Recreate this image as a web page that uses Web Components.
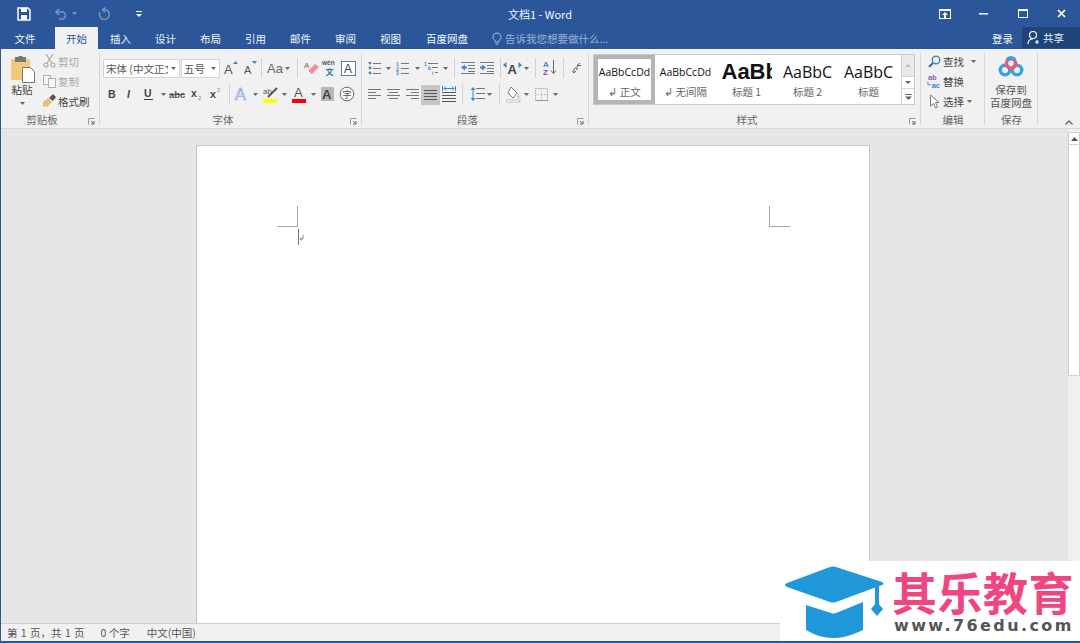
<!DOCTYPE html>
<html lang="zh"><head><meta charset="utf-8"><title>文档1 - Word</title>
<style>
html,body{margin:0;padding:0;height:643px;overflow:hidden;background:#e6e6e6}
body{font-family:"Noto Sans CJK SC","Liberation Sans",sans-serif;font-size:10.5px;color:#444}
</style></head><body>
<wd-app>
  <wd-titlebar slot="top"></wd-titlebar>
  <wd-tabs slot="top"></wd-tabs>
  <wd-ribbon slot="top">
    <rb-group w="100" label="剪贴板" launcher>
      <div style="display:flex;margin-top:-7px;height:61px">
        <rb-paste></rb-paste>
        <div>
          <rb-small icon="cut" dim>剪切</rb-small>
          <rb-small icon="copy" dim>复制</rb-small>
          <rb-small icon="brush">格式刷</rb-small>
        </div>
      </div>
    </rb-group>
    <rb-group w="262" label="字体" launcher pad="3">
      <rb-row>
        <rb-select w="77">宋体 (中文正文)</rb-select>
        <rb-select w="39" ml="1">五号</rb-select>
        <rb-btn w="18" ml="2" icon="growA"></rb-btn>
        <rb-btn w="18" ml="1" icon="shrinkA"></rb-btn>
        <rb-btn w="1" ml="2" icon="div"></rb-btn>
        <rb-btn w="20" ml="3" icon="aa"></rb-btn>
        <rb-btn w="5" icon="caret"></rb-btn>
        <rb-btn w="1" ml="7" icon="div"></rb-btn>
        <rb-btn w="18" ml="5" icon="eraser"></rb-btn>
        <rb-btn w="17" icon="wen"></rb-btn>
        <rb-btn w="18" ml="1" icon="boxA"></rb-btn>
      </rb-row>
      <rb-row>
        <rb-btn w="18" icon="bold"></rb-btn>
        <rb-btn w="18" icon="italic"></rb-btn>
        <rb-btn w="18" ml="1" icon="under"></rb-btn>
        <rb-btn w="10" icon="caret"></rb-btn>
        <rb-btn w="20" icon="strike"></rb-btn>
        <rb-btn w="18" icon="sub"></rb-btn>
        <rb-btn w="18" ml="1" icon="sup"></rb-btn>
        <rb-btn w="1" ml="4" icon="div"></rb-btn>
        <rb-btn w="18" ml="3" icon="fx"></rb-btn>
        <rb-btn w="8" icon="caret"></rb-btn>
        <rb-btn w="20" ml="1" icon="hl"></rb-btn>
        <rb-btn w="8" icon="caret"></rb-btn>
        <rb-btn w="20" ml="1" icon="colorA"></rb-btn>
        <rb-btn w="8" icon="caret"></rb-btn>
        <rb-btn w="18" ml="2" icon="shadeA"></rb-btn>
        <rb-btn w="18" ml="1" icon="zi"></rb-btn>
      </rb-row>
    </rb-group>
    <rb-group w="227" label="段落" launcher pad="4">
      <rb-row>
        <rb-btn w="16" icon="bullets"></rb-btn>
        <rb-btn w="8" ml="2" icon="caret"></rb-btn>
        <rb-btn w="16" ml="3" icon="numbers"></rb-btn>
        <rb-btn w="8" ml="2" icon="caret"></rb-btn>
        <rb-btn w="16" ml="3" icon="multi"></rb-btn>
        <rb-btn w="8" ml="1" icon="caret"></rb-btn>
        <rb-btn w="1" ml="5" icon="div"></rb-btn>
        <rb-btn w="16" ml="5" icon="outdent"></rb-btn>
        <rb-btn w="16" ml="3" icon="indent"></rb-btn>
        <rb-btn w="1" ml="5" icon="div"></rb-btn>
        <rb-btn w="19" ml="2" icon="asian"></rb-btn>
        <rb-btn w="8" icon="caret"></rb-btn>
        <rb-btn w="1" ml="5" icon="div"></rb-btn>
        <rb-btn w="18" ml="5" icon="az"></rb-btn>
        <rb-btn w="1" ml="4" icon="div"></rb-btn>
        <rb-btn w="16" ml="4" icon="pil"></rb-btn>
      </rb-row>
      <rb-row>
        <rb-btn w="16" icon="left"></rb-btn>
        <rb-btn w="16" ml="3" icon="center"></rb-btn>
        <rb-btn w="16" ml="3" icon="right"></rb-btn>
        <rb-btn w="19" ml="1" icon="justify" active></rb-btn>
        <rb-btn w="16" ml="1" icon="dist"></rb-btn>
        <rb-btn w="1" ml="5" icon="div"></rb-btn>
        <rb-btn w="16" ml="6" icon="spacing"></rb-btn>
        <rb-btn w="8" icon="caret"></rb-btn>
        <rb-btn w="1" ml="6" icon="div"></rb-btn>
        <rb-btn w="16" ml="5" icon="bucket"></rb-btn>
        <rb-btn w="8" ml="1" icon="caret"></rb-btn>
        <rb-btn w="16" ml="3" icon="borders"></rb-btn>
        <rb-btn w="8" ml="2" icon="caret"></rb-btn>
      </rb-row>
    </rb-group>
    <rb-group w="332" label="样式" launcher pad="4"><rb-gallery></rb-gallery></rb-group>
    <rb-group w="64" label="编辑">
      <div style="margin-top:-7px;padding-left:6px">
        <rb-small icon="find" caret="5">查找</rb-small>
        <rb-small icon="replace">替换</rb-small>
        <rb-small icon="select" caret="1">选择</rb-small>
      </div>
    </rb-group>
    <rb-group w="53" label="保存"><rb-save></rb-save></rb-group>
    <rb-collapse></rb-collapse>
  </wd-ribbon>
  <wd-page slot="main"></wd-page>
  <wd-scroll slot="main"></wd-scroll>
  <wd-status slot="bottom"></wd-status>
  <wd-logo slot="over"></wd-logo>
</wd-app>
<script>
const svg=(w,h,s)=>`<svg xmlns="http://www.w3.org/2000/svg" width="${w}" height="${h}" viewBox="0 0 ${w} ${h}" style="display:block">${s}</svg>`;
const lines=(arr,c='#777')=>arr.map(([x,y,w])=>`<rect x="${x}" y="${y}" width="${w}" height="1" fill="${c}"/>`).join('');
const T=(x,y,t,size,fill,extra='')=>`<text x="${x}" y="${y}" font-size="${size}" fill="${fill}" font-family="Liberation Sans,sans-serif" ${extra}>${t}</text>`;
const BL='#3f83c8';
const ICONS={
 caret:()=>svg(5,3,'<path d="M0 0h5L2.5 3z" fill="#666"/>'),
 div:()=>svg(1,20,'<rect width="1" height="20" fill="#d2d2d2"/>'),
 growA:()=>svg(16,16,T(1,14,'A',13,'#555')+'<path d="M10 4l2.500-3 2.500 3z" fill="'+BL+'"/>'),
 shrinkA:()=>svg(16,16,T(2,14,'A',11,'#555')+'<path d="M10 1h5l-2.500 3z" fill="'+BL+'"/>'),
 aa:()=>svg(18,14,T(1,12,'Aa',13,'#666')),
 eraser:()=>svg(16,16,T(0,8,'A',8,'#8a5a6a')+'<path d="M4 11l7-7 4 3-7 7H6z" fill="#ef8f9c"/><path d="M4 11l3 3" stroke="#fff"/>'),
 wen:()=>svg(17,19,T(1,6,'wén',6.500,'#555','font-weight="700"')+`<text x="4.500" y="16" font-size="8" fill="#1f73b7" font-weight="700" font-family="Noto Sans CJK SC">文</text>`),
 boxA:()=>svg(15,15,'<rect x=".5" y=".5" width="14" height="14" fill="#fff" stroke="#4f7fb5"/>'+T(3,12,'A',12,'#444')),
 bold:()=>svg(12,14,T(2,11,'B',10.500,'#444','font-weight="700"')),
 italic:()=>svg(12,14,T(3,11,'I',10.500,'#444','font-family="Liberation Serif" font-weight="700" font-style="italic"')),
 under:()=>svg(12,14,T(1,10,'U',10.500,'#444','font-weight="700"')+'<rect x="1" y="12" width="9" height="1" fill="#444"/>'),
 strike:()=>svg(20,12,T(1,10,'abc',9.500,'#555','font-weight="700"')+'<rect x="1" y="6" width="16" height="1" fill="#555"/>'),
 sub:()=>svg(14,14,T(1,10,'x',10.500,'#444','font-weight="700"')+T(8,13,'2',5.500,BL)),
 sup:()=>svg(14,14,T(1,11,'x',10.500,'#444','font-weight="700"')+T(8,5,'2',5.500,BL)),
 fx:()=>svg(16,16,`<text x="1" y="14" font-size="16" fill="#eef4fb" stroke="#5b94cf" stroke-width=".6" font-family="Liberation Sans">A</text>`),
 hl:()=>svg(15,19,T(0,9,'ab',8,'#555')+'<path d="M5 12l9-9" stroke="#555" stroke-width="2"/><rect y="14" width="14" height="4" fill="#ffff00"/>'),
 colorA:()=>svg(14,19,T(2,12,'A',13,'#555')+'<rect y="14" width="14" height="4" fill="#ff0000"/>'),
 shadeA:()=>svg(14,15,'<rect width="13" height="14" fill="#b8b8b8"/>'+T(1,12,'A',13,'#444','font-weight="700"')),
 zi:()=>svg(16,16,'<circle cx="8" cy="8" r="6.800" fill="#fbfbfb" stroke="#666"/><text x="3.500" y="11.500" font-size="9" fill="#555" font-family="Noto Sans CJK SC">字</text>'),
 bullets:()=>svg(13,13,[1,6,11].map(y=>`<circle cx="2" cy="${y}" r="1.400" fill="${BL}"/>`).join('')+lines([[5,1,8],[5,6,8],[5,11,8]])),
 numbers:()=>svg(14,14,T(0,4.500,'1',5,BL,'font-weight="700"')+T(0,9.500,'2',5,BL,'font-weight="700"')+T(0,14,'3',5,BL,'font-weight="700"')+lines([[5,2,8],[5,7,8],[5,12,8]])),
 multi:()=>svg(16,14,T(0,5,'1',5,BL,'font-weight="700"')+T(4,9,'b',5,BL,'font-weight="700"')+T(8,14,'i',5,BL,'font-weight="700"')+lines([[4,2,10],[8,6,6],[11,11,3]])),
 outdent:()=>svg(15,12,lines([[0,0,14],[7,3,7],[7,6,7],[7,9,7],[0,11,14]])+`<path d="M0 5.500l4-3v2h2v2H4v2z" fill="${BL}"/>`),
 indent:()=>svg(15,12,lines([[0,0,14],[7,3,7],[7,6,7],[7,9,7],[0,11,14]])+`<path d="M6 5.500l-4-3v2H0v2h2v2z" fill="${BL}"/>`),
 asian:()=>svg(19,16,T(4.500,14,'A',13,'#444','font-weight="700"')+`<path d="M0 5l3.500-3v6zM19 5l-3.500-3v6z" fill="${BL}"/>`),
 az:()=>svg(14,16,T(0,7,'A',8,BL,'font-weight="700"')+T(0,15,'Z',8,'#8a3fa8','font-weight="700"')+'<path d="M10.500 0v13M8 10.500l2.500 3 2.500-3" stroke="#666" fill="none"/>'),
 pil:()=>svg(11,12,`<path d="M9 1L6 3.500h4M7 4L3 7M3 7v4M1 9l2 2 2-2" stroke="#666" fill="none"/><circle cx="6" cy="7" r="1" fill="${BL}"/>`),
 left:()=>svg(13,12,lines([[0,1,13],[0,4,8],[0,7,13],[0,10,8]])),
 center:()=>svg(13,12,lines([[0,1,13],[2,4,9],[0,7,13],[2,10,9]])),
 right:()=>svg(13,12,lines([[0,1,13],[5,4,8],[0,7,13],[5,10,8]])),
 justify:()=>svg(13,12,lines([[0,1,13],[0,4,13],[0,7,13],[0,10,13]],'#555')),
 dist:()=>svg(14,17,lines([[0,6,14],[0,9,14],[0,12,14],[0,15,14]],'#555')+`<path d="M.5 0v5M13.500 0v5" stroke="${BL}"/><path d="M2 2.500h10M4 .5L2 2.500l2 2M10 .5l2 2-2 2" stroke="${BL}" fill="none"/>`),
 spacing:()=>svg(15,16,lines([[6,2,9],[6,7,9],[6,12,9]])+`<path d="M3 2v12" stroke="${BL}"/><path d="M.5 4L3 1l2.500 3zM.5 12L3 15l2.500-3z" fill="${BL}"/>`),
 bucket:()=>svg(15,17,'<path d="M5 1l6 6-4 5-5-5z" fill="#fdfdfd" stroke="#777"/><path d="M12 8c1 2 2 3 1 4s-2 0-1-4z" fill="#e6b35c"/><rect y="14" width="14" height="2" fill="#fff" stroke="#999" stroke-width=".6"/>'),
 borders:()=>svg(13,13,'<rect x=".5" y=".5" width="12" height="12" fill="none" stroke="#aaa" stroke-dasharray="1.500 1"/><path d="M6.500 1v11M1 6.500h11" stroke="#bbb" stroke-dasharray="1 1"/><rect y="12" width="13" height="1" fill="#999"/>'),
 cut:()=>svg(13,14,'<g fill="none" stroke="#a8a8a8" stroke-width="1.200"><circle cx="3" cy="11" r="2"/><circle cx="10" cy="11" r="2"/><path d="M4 9L10 0M9 9L3 0"/></g>'),
 copy:()=>svg(13,13,'<g fill="#f5f5f5" stroke="#b0b0b0"><rect x=".5" y=".5" width="7" height="9"/><rect x="5.500" y="3.500" width="7" height="9"/></g>'),
 brush:()=>svg(14,14,'<path d="M1 8l5-4 4 4-5 5-2-1-2 1z" fill="#e9bd77"/><path d="M7 4l4-4 3 3-3 4z" fill="#555"/>'),
 find:()=>svg(13,13,`<circle cx="8" cy="5" r="3.800" fill="none" stroke="${BL}" stroke-width="1.400"/><path d="M5 8l-4 4" stroke="#2a6aa8" stroke-width="1.800"/>`),
 replace:()=>svg(15,16,T(1,7,'ab',8,'#8a5fb0','font-weight="700"')+T(5,15,'ac',8,BL,'font-weight="700"')+`<path d="M1 9v3h3" stroke="${BL}" fill="none"/>`),
 select:()=>svg(11,15,'<path d="M1.500 1v11l3-2.500 2 4.500 2-1-2-4.500h3.500z" fill="#fff" stroke="#777"/>')
};
function def(name,css,html){
  customElements.define(name,class extends HTMLElement{
    constructor(){super();this.attachShadow({mode:'open'});this.shadowRoot.innerHTML=`<style>${css}</style>`+(typeof html==='function'?html(this):html);}
  });
}
def('wd-app',`:host{display:flex;flex-direction:column;position:relative;height:643px;width:1080px;box-sizing:border-box;border-left:1px solid #2b579a;border-bottom:2px solid #2b579a;overflow:hidden;background:#e6e6e6}
 .main{flex:1;display:grid;grid-template-columns:1fr 13px;min-height:0;overflow:hidden}.top{margin-left:-1px}`,
 `<div class="top"><slot name="top"></slot></div><div class="main"><slot name="main"></slot></div><slot name="bottom"></slot><slot name="over"></slot>`);
def('wd-titlebar',`:host{display:flex;height:27px;background:#2b579a;color:#fff;align-items:center;position:relative;font-size:10.5px}
 .c{display:flex;align-items:center;justify-content:center}
 .t{position:absolute;left:0;right:0;text-align:center;color:#f0f4fa;font-size:11px}
 .r{margin-left:auto;display:flex}.r .c{width:39px;height:27px}`,
 `<div class="c" style="width:14px;margin-left:17px">${svg(14,14,'<path d="M1 1h10l2 2v10H1z" fill="none" stroke="#fff" stroke-width="1.500"/><rect x="4" y="1" width="6" height="4" fill="#fff"/><rect x="4" y="8" width="6" height="5" fill="#fff"/>')}</div>
 <div class="c" style="margin-left:23px;width:13px">${svg(13,12,'<path d="M2 4h6a3.500 3.500 0 010 7H5M5 1L2 4l3 3" fill="none" stroke="#7a95c0" stroke-width="1.500"/>')}</div>
 <div class="c" style="margin-left:5px">${svg(5,3,'<path d="M0 0h5L2.500 3z" fill="#7a95c0"/>')}</div>
 <div class="c" style="margin-left:20px">${svg(13,13,'<path d="M8.500 .5l-3 2.300 3 2.300M5.500 2.800A5 5 0 113 5" fill="none" stroke="#7a95c0" stroke-width="1.400"/>')}</div>
 <div class="c" style="margin-left:26px">${svg(6,6,'<rect width="6" height="1" fill="#fff"/><path d="M0 3h6L3 6z" fill="#fff"/>')}</div>
 <div class="t">文档1 - Word</div>
 <div class="r">
 <div class="c">${svg(12,10,'<rect x=".5" y=".5" width="11" height="9" fill="none" stroke="#fff"/><rect y="0" width="12" height="2" fill="#fff"/><path d="M6 3l3 3H7v3H5V6H3z" fill="#fff"/>')}</div>
 <div class="c">${svg(9,2,'<rect width="9" height="1.500" fill="#fff"/>')}</div>
 <div class="c">${svg(10,9,'<rect x=".5" y="1" width="9" height="7.500" fill="none" stroke="#fff"/><rect width="10" height="2" fill="#fff"/>')}</div>
 <div class="c" style="width:38px">${svg(9,9,'<path d="M1 1l7 7M8 1L1 8" stroke="#fff" stroke-width="1.700"/>')}</div>
 </div>`);
def('wd-tabs',`:host{display:flex;height:22px;background:#2b579a;color:#f2f5fa;font-size:10.5px;align-items:stretch;position:relative}
 .t{width:45px;display:flex;align-items:center;justify-content:center;height:22px}
 .a{background:#f1f1f1;color:#2b579a;width:43px;height:23px;position:relative;z-index:2}
 .tell{margin-left:11px;display:flex;align-items:center;color:#9db3d3;gap:3px}
 .right{margin-left:auto;display:flex}.login{display:flex;align-items:center;margin-right:9px}
 .share{width:58px;background:#1f4478;display:flex;align-items:center;gap:2px;padding-left:5px;box-sizing:border-box;height:21px}`,
 `<div class="t" style="width:44px;margin-left:3px">文件</div><div class="t" style="width:8px"></div><div class="t a">开始</div>
 <div class="t">插入</div><div class="t">设计</div><div class="t">布局</div><div class="t">引用</div><div class="t">邮件</div><div class="t">审阅</div><div class="t">视图</div>
 <div class="t" style="width:68px">百度网盘</div>
 <div class="tell">${svg(10,13,'<path d="M5 1a4 4 0 00-2 7.500V10h4V8.500A4 4 0 005 1zM3.500 12h3" fill="none" stroke="#a9bcd9"/>')}<span>告诉我您想要做什么...</span></div>
 <div class="right"><div class="login">登录</div><div class="share">${svg(14,15,'<circle cx="6" cy="5" r="3.500" fill="none" stroke="#fff" stroke-width="1.200"/><path d="M1 14c0-3 2-5 5-5M10 10v4M8 12h4" fill="none" stroke="#fff" stroke-width="1.200"/>')}<span>共享</span></div></div>`);
def('wd-ribbon',`:host{display:flex;height:80px;background:#f1f1f1;border-bottom:1px solid #d6d6d6;box-sizing:border-box;color:#444}`,`<slot></slot>`);
def('rb-group',`:host{display:flex;flex-direction:column;box-sizing:border-box;height:79px;position:relative;flex:none}
 .rule{position:absolute;right:0;top:4px;bottom:3px;width:1px;background:#d6d6d6}
 .body{flex:1;padding-top:9px;display:flex;flex-direction:column;gap:6px;min-height:0}
 .lab{height:17px;display:grid;grid-template-columns:1fr auto 1fr;align-items:center;color:#666;font-size:10.5px;box-sizing:border-box}
 .lab.l{grid-template-columns:1fr auto 1fr 16px}
 .lab span{grid-column:2}.lab i{grid-column:4;justify-self:end;margin:3px 5px 0 0;display:block}`,
 h=>{h.style.width=h.getAttribute('w')+'px';const p=h.getAttribute('pad')||0;const l=h.hasAttribute('launcher');return `<div class="rule"></div><div class="body" style="padding-left:${p}px"><slot></slot></div><div class="lab ${l?'l':''}"><span>${h.getAttribute('label')}</span>${l?`<i>${svg(7,7,'<path d="M.5 6.500v-6h6" fill="none" stroke="#999"/><path d="M3 3l3 3M6 3v3H3" fill="none" stroke="#666"/>')}</i>`:''}</div>`});
def('rb-row',`:host{display:flex;height:20px;align-items:center;flex:none}`,`<slot></slot>`);
def('rb-btn',`:host{display:flex;align-items:center;justify-content:center;height:20px;flex:none}:host([active]){background:#c6c6c6;position:relative;top:1px}`,
 h=>{h.style.width=h.getAttribute('w')+'px';h.style.marginLeft=(h.getAttribute('ml')||0)+'px';return ICONS[h.getAttribute('icon')]()});
def('rb-select',`:host{display:flex;align-items:center;height:19px;box-sizing:border-box;background:#fff;border:1px solid #d4d4d4;padding-left:2px;font-size:10.5px;color:#555;flex:none;overflow:hidden;position:relative}
 .tx{flex:1;white-space:nowrap;overflow:hidden;min-width:0}.cr{width:11px;flex:none;display:flex;justify-content:center}`,
 h=>{h.style.width=h.getAttribute('w')+'px';h.style.marginLeft=(h.getAttribute('ml')||0)+'px';return `<div class="tx"><slot></slot></div><div class="cr">${ICONS.caret()}</div>`});
def('rb-small',`:host{display:flex;align-items:center;height:20px;gap:2px;font-size:10.5px;color:#444;white-space:nowrap}
 :host([dim]){color:#a6a6a6}.i{width:14px;display:flex;justify-content:center;flex:none}.cr{display:block}`,
 h=>`<div class="i">${ICONS[h.getAttribute('icon')]()}</div><slot></slot>${h.hasAttribute('caret')?`<span class="cr" style="margin-left:${h.getAttribute('caret')}px">${ICONS.caret()}</span>`:''}`);
def('rb-paste',`:host{display:flex;flex-direction:column;align-items:center;width:44px;margin-right:-2px;padding-top:5px;box-sizing:border-box;font-size:10.5px;color:#444;flex:none}
 svg{margin-left:2px}.l{margin-top:-1px}.c{margin-top:5px}.c svg{margin:0}`,
 `${svg(24,27,'<rect x="0" y="3" width="19" height="21" rx="1" fill="#f0c97c"/><rect x="4" y="1" width="11" height="5" fill="#777"/><rect x="7.500" y="0" width="4" height="3" fill="#777"/><path d="M11.500 11.500h8l4 4v11h-12z" fill="#fff" stroke="#777"/>')}
 <div class="l">粘贴</div><div class="c">${ICONS.caret()}</div>`);
def('rb-gallery',`:host{display:flex;height:51px;width:322px;box-sizing:border-box;background:#fff;border:1px solid #c8c8c8;margin-top:-4px;color:#666}
 .it{width:61px;box-sizing:border-box;display:flex;flex-direction:column;align-items:center;overflow:hidden;flex:none}
 .sel{border:4px solid #b4b4b4;padding-top:2px;}
 .it:not(.sel){padding-top:6px}
 .s{height:22px;display:flex;align-items:center;white-space:nowrap;font-family:"Open Sans","Liberation Sans",sans-serif;color:#111;width:53px;justify-content:center;overflow:hidden}
 .n{font-size:10.5px;line-height:14px;margin-top:2px;display:flex;align-items:center;gap:3px}
 .x{margin-left:auto;width:12px;display:flex;flex-direction:column;border-left:1px solid #d4d4d4;flex:none}
 .x div{display:flex;align-items:center;justify-content:center;background:#fff;border-bottom:1px solid #d4d4d4;box-sizing:border-box}`,
 `<div class="it sel"><div class="s" style="font-size:10.500px">AaBbCcDd</div><div class="n">↲ 正文</div></div>
 <div class="it"><div class="s" style="font-size:10.500px">AaBbCcDd</div><div class="n">↲ 无间隔</div></div>
 <div class="it"><div class="s" style="font-size:22px;font-weight:700;justify-content:flex-start;width:50px;font-family:'Liberation Sans'">AaBb</div><div class="n">标题 1</div></div>
 <div class="it"><div class="s" style="font-size:16px">AaBbC</div><div class="n">标题 2</div></div>
 <div class="it"><div class="s" style="font-size:16px">AaBbC</div><div class="n">标题</div></div>
 <div class="x"><div style="height:22px;background:#e9e9e9">${svg(6,3,'<path d="M0 3h6L3 0z" fill="#bdbdbd"/>')}</div><div style="height:12px">${svg(6,3,'<path d="M0 0h6L3 3z" fill="#666"/>')}</div><div style="height:15px;border:0">${svg(7,6,'<rect width="7" height="1" fill="#666"/><path d="M0 2.500h7L3.500 6z" fill="#666"/>')}</div></div>`);
def('rb-save',`:host{display:flex;flex-direction:column;align-items:center;margin-top:-2px;font-size:10.5px;line-height:13px;color:#555;width:52px;text-align:center}
 svg{margin-bottom:5px}`,
 svg(26,22,'<g fill="none" stroke-width="3.400"><circle cx="7" cy="14" r="4.800" stroke="#38a1ea"/><circle cx="19" cy="14" r="4.800" stroke="#38a1ea"/><circle cx="13" cy="7.500" r="4.600" stroke="#ef5b6d"/><path d="M9 3.800a5 5 0 018 0" stroke="#38a1ea"/></g>')+`<div>保存到<br>百度网盘</div>`);
def('rb-collapse',`:host{flex:1;display:flex;justify-content:flex-end;align-items:flex-end;padding:0 7px 3px 0}`,svg(8,5,'<path d="M.5 4.500L4 1l3.500 3.500" fill="none" stroke="#666" stroke-width="1.400"/>'));
def('wd-page',`:host{display:flex;justify-content:center;padding:16px 2px 0 0;min-height:0;overflow:hidden}
 .p{width:674px;box-sizing:border-box;height:600px;background:#fff;border:1px solid #c6c6c6;padding:60px 79px 0 80px}
 .m{display:flex;justify-content:space-between}
 .a,.b{width:20px;height:20px;border-bottom:1px solid #a8a8a8}.a{border-right:1px solid #a8a8a8}.b{border-left:1px solid #a8a8a8}
 .cur{margin:2px 0 0 21px;display:block}`,
 `<div class="p"><div class="m"><div class="a"></div><div class="b"></div></div><div class="cur">${svg(7,17,'<rect width="1" height="16" fill="#777"/><path d="M5 6v4H2M3.500 8.500L2 10l1.500 1.500" fill="none" stroke="#888"/>')}</div></div>`);
def('wd-scroll',`:host{display:flex;flex-direction:column;background:#f0f0f0;border-left:1px solid #e2e2e2;padding-top:3px;box-sizing:border-box}
 .u{height:13px;background:#fff;border:1px solid #d0d0d0;box-sizing:border-box;display:flex;align-items:center;justify-content:center}
 .t{height:231px;background:#fff;border:1px solid #d0d0d0;border-top:0;box-sizing:border-box}`,
 `<div class="u">${svg(7,4,'<path d="M0 4h7L3.500 0z" fill="#555"/>')}</div><div class="t"></div>`);
def('wd-status',`:host{display:flex;height:18px;background:#f1f1f1;border-top:1px solid #cfcfcf;box-sizing:border-box;align-items:center;font-size:10.5px;color:#555;padding-left:6px;flex:none}
 span{white-space:pre}`,`<span style="word-spacing:1px">第 1 页，共 1 页</span><span style="margin-left:16px">0 个字</span><span style="margin-left:17px">中文(中国)</span>`);
def('wd-logo',`:host{position:absolute;right:0;bottom:-2px;width:300px;height:82px;background:#fff;display:flex}
 .cap{margin:4px 0 0 4px;flex:none}
 .r{margin-left:4px;display:flex;flex-direction:column}
 .a{font:700 45px/45px "Noto Sans CJK SC",sans-serif;letter-spacing:.5px;color:#ef4581;margin-top:8px;white-space:nowrap}
 .b{font:700 16px/16px "DejaVu Sans",sans-serif;letter-spacing:2.4px;color:#555;margin:4px 0 0 2px;white-space:nowrap}`,
 `<div class="cap">${svg(104,76,'<path d="M1 20Q1 19 3 18L46 2Q49 1 52 2L98 17Q101 19 98 20L52 37Q49 38 46 37L3 22Q1 21 1 20z" fill="#1f97d9"/><path d="M22 40L47 48Q49 49 52 48L79 37V65Q60 74 49 73Q35 73 22 65z" fill="#1f97d9"/><path d="M91 21h4v19h-4z" fill="#1f97d9"/><path d="M93 37l6 7-6 7-6-7z" fill="#1f97d9"/>')}</div>
 <div class="r"><div class="a">其乐教育</div><div class="b">www.76edu.com</div></div>`);
</script>
</body></html>
